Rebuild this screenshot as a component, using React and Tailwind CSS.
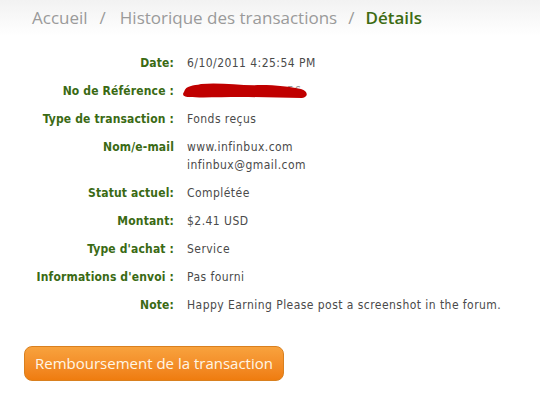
export default function App() {
  const rows = [
    ["Date:", ["6/10/2011 4:25:54 PM"]],
    ["No de Référence :", ["__REDACT__"]],
    ["Type de transaction :", ["Fonds reçus"]],
    ["Nom/e-mail", ["www.infinbux.com", "infinbux@gmail.com"]],
    ["Statut actuel:", ["Complétée"]],
    ["Montant:", ["$2.41 USD"]],
    ["Type d'achat :", ["Service"]],
    ["Informations d'envoi :", ["Pas fourni"]],
    ["Note:", ["Happy Earning Please post a screenshot in the forum."]],
  ];
  return (
    <div className="w-[540px] h-[407px] bg-white overflow-hidden" style={{ fontFamily: '"DejaVu Sans Condensed", "DejaVu Sans", sans-serif' }}>
      <div className="h-[36px] bg-gradient-to-b from-[#f2f2f2] to-white pl-[32px] pt-[6px] text-[17px] text-[#9a9a9a] leading-[24px]" style={{ fontFamily: '"Open Sans", sans-serif' }}>
        <span>Accueil</span>
        <span className="ml-[12px] mr-[14px]">/</span>
        <span>Historique des transactions</span>
        <span className="ml-[11px] mr-[11px]">/</span>
        <span className="text-[#3d6b12] font-semibold">Détails</span>
      </div>
      <div className="mt-[18px] flex flex-col gap-[10px] text-[12px] leading-[18px]">
        {rows.map(([label, vals]) => (
          <div key={label} className="flex">
            <div className="w-[174px] shrink-0 text-right font-bold text-[#3a6a14] tracking-[0.15px]">{label}</div>
            <div className="pl-[13px] text-[#4a4a4a] tracking-[0.45px]">
              {vals.map((v) =>
                v === "__REDACT__" ? (
                  <div key={v} className="relative h-[18px] w-[130px]">
                    <span className="absolute left-[100px] top-0 text-[#999]">56</span>
                    <svg className="absolute left-[-6px] top-[-3px]" width="130" height="24" viewBox="0 0 130 24">
                      <path d="M3 13 C5 6 12 7 20 5 C40 3 60 7 80 6 C95 6 110 8 120 10 C127 12 128 18 121 19 C100 19 80 18 60 18 C40 18 20 19 8 18 C2 18 1 15 3 13 Z" fill="#c00000" />
                    </svg>
                  </div>
                ) : (
                  <div key={v}>{v}</div>
                )
              )}
            </div>
          </div>
        ))}
      </div>
      <div className="mt-[32px] pl-[24px]">
        <button className="h-[35px] px-[10px] rounded-[8px] border border-[#d9801f] bg-gradient-to-b from-[#f8a23d] to-[#ef7c0e] text-[#fff6e6] text-[15px]" style={{ fontFamily: '"Open Sans", sans-serif' }}>
          Remboursement de la transaction
        </button>
      </div>
    </div>
  );
}
